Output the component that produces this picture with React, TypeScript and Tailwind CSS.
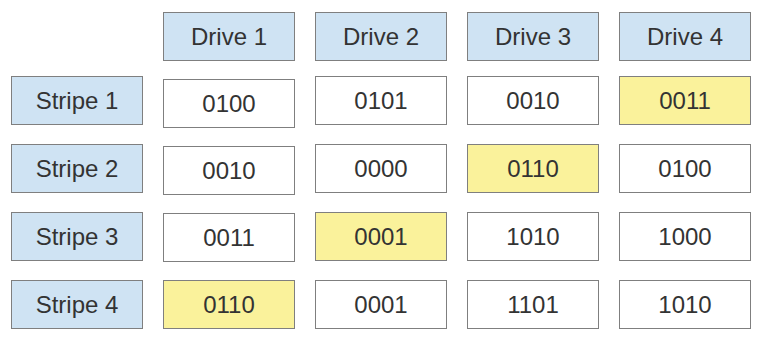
const drives = ['Drive 1', 'Drive 2', 'Drive 3', 'Drive 4']

// each stripe: four blocks, the parity block is the one marked p
const stripes = [
  { name: 'Stripe 1', blocks: ['0100', '0101', '0010', '0011'], p: 3 },
  { name: 'Stripe 2', blocks: ['0010', '0000', '0110', '0100'], p: 2 },
  { name: 'Stripe 3', blocks: ['0011', '0001', '1010', '1000'], p: 1 },
  { name: 'Stripe 4', blocks: ['0110', '0001', '1101', '1010'], p: 0 },
]

// first column sits a little lower in the upper rows
const firstColShift = ['mt-[3px]', 'mt-[2px]', 'mt-[1px]', 'mt-0']

const box = 'w-[132px] h-[49px] shrink-0 border-[1.5px] border-[#7f7f7f] flex items-center justify-center'

export default function App() {
  return (
    <div
      className="w-[763px] h-[341px] bg-white text-[24px] text-[#333333] pt-3 pl-[11px]"
      style={{ fontFamily: '"Liberation Sans", Arial, sans-serif' }}
    >
      <div className="flex gap-5 h-[49px]">
        <div className="w-[132px] shrink-0" />
        {drives.map((d) => (
          <div key={d} className={`${box} bg-[#cfe3f3]`}>
            {d}
          </div>
        ))}
      </div>

      <div className="flex flex-col gap-[19px] mt-[15px]">
        {stripes.map((s, r) => (
          <div key={s.name} className="flex gap-5 items-start h-[49px]">
            <div className={`${box} bg-[#cfe3f3]`}>{s.name}</div>
            {s.blocks.map((b, i) => (
              <div
                key={i}
                className={`${box} ${i === 0 ? firstColShift[r] : ''} ${
                  i === s.p ? 'bg-[#faf29b]' : 'bg-white'
                }`}
              >
                {b}
              </div>
            ))}
          </div>
        ))}
      </div>
    </div>
  )
}
